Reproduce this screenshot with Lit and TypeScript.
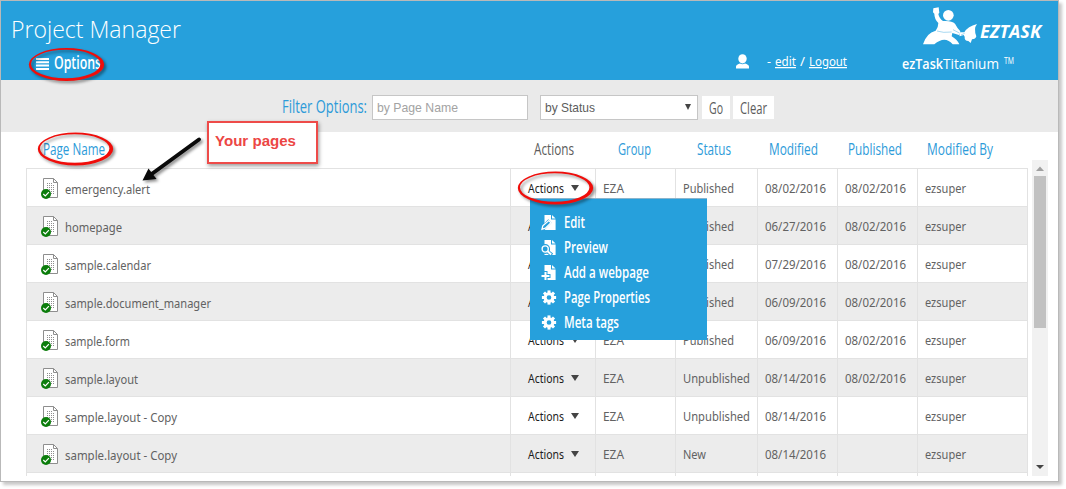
import { LitElement, css, html, svg } from "lit";
import { classMap } from "lit/directives/class-map.js";
import { customElement, property } from "lit/decorators.js";

interface Page {
  name: string;
  status: string;
  modified: string;
  published: string;
}

const pages: Page[] = [
  { name: "emergency.alert", status: "Published", modified: "08/02/2016", published: "08/02/2016" },
  { name: "homepage", status: "Published", modified: "06/27/2016", published: "08/02/2016" },
  { name: "sample.calendar", status: "Published", modified: "07/29/2016", published: "08/02/2016" },
  { name: "sample.document_manager", status: "Published", modified: "06/09/2016", published: "08/02/2016" },
  { name: "sample.form", status: "Published", modified: "06/09/2016", published: "08/02/2016" },
  { name: "sample.layout", status: "Unpublished", modified: "08/14/2016", published: "08/02/2016" },
  { name: "sample.layout - Copy", status: "Unpublished", modified: "08/14/2016", published: "" },
  { name: "sample.layout - Copy", status: "New", modified: "08/14/2016", published: "" },
];

const nameWidths: Record<string, number> = {
  "emergency.alert": 85,
  homepage: 57,
  "sample.calendar": 86,
  "sample.document_manager": 146,
  "sample.form": 65,
  "sample.layout": 73,
  "sample.layout - Copy": 112,
};

const statusWidths: Record<string, number> = { Published: 51, Unpublished: 67, New: 23 };

/* Text set to a given width, for the condensed faces of the interface. */
@customElement("fit-text")
export class FitText extends LitElement {
  static styles = css`
    :host {
      display: block;
      flex: none;
      line-height: 0;
    }

    svg {
      display: block;
      height: 1em;
      overflow: visible;
    }

    text {
      fill: currentColor;
    }

    :host([underline]) text {
      text-decoration: underline;
    }
  `;

  @property()
  text = "";

  @property({ type: Number })
  width = 0;

  render() {
    return html`
      <svg width=${this.width}>
        <text x="0" y="0.8em" textLength=${this.width} lengthAdjust="spacingAndGlyphs">${this.text}</text>
      </svg>
    `;
  }
}

@customElement("page-icon")
export class PageIcon extends LitElement {
  static styles = css`
    :host,
    svg {
      display: block;
    }
  `;

  render() {
    return html`
      <svg width="18" height="22" viewBox="0 0 18 22">
        <path d="M2.5 .5h10l4 4v15h-14z" fill="#fff" stroke="#8e8e8e" />
        <path d="M12.5 .5v4h4" fill="none" stroke="#8e8e8e" />
        <path
          d="M6 5.5h5M6 7.5h8M6 9.5h8M6 11.5h8M6 13.5h8M6 15.5h8"
          stroke="#8e8e8e"
          stroke-dasharray="1 1"
          fill="none"
        />
        <circle cx="5" cy="16" r="5" fill="#0b7d0b" />
        <path d="M2.3 16l2 2 3.6-3.8" fill="none" stroke="#fff" stroke-width="1.2" />
      </svg>
    `;
  }
}

@customElement("menu-icon")
export class MenuIcon extends LitElement {
  static styles = css`
    :host,
    svg {
      display: block;
    }

    .cut {
      stroke: #26a0dc;
      fill: none;
    }

    .line {
      stroke: #fff;
      fill: none;
    }
  `;

  @property()
  name = "edit";

  overlay() {
    switch (this.name) {
      case "edit":
        return svg`
          <path class="cut" d="M1.5 13.5L9 6" stroke-width="4.6" />
          <path class="line" d="M1 14.2l.8-3.4L7.8 5.6l2.2 2.2-5.6 5.4z" stroke-width="1.3" />
        `;
      case "preview":
        return svg`
          <circle class="cut" cx="4.2" cy="9" r="3.4" stroke-width="3" />
          <path class="cut" d="M6.5 11.5L11 15" stroke-width="3.6" />
          <circle cx="4.2" cy="9" r="3.1" fill="#26a0dc" stroke="#fff" stroke-width="1.3" />
          <path class="line" d="M6.6 11.3l3.6 3.2" stroke-width="2" />
        `;
      default:
        return svg`
          <path class="cut" d="M4.5 6v9.5M0 11h9.5" stroke-width="4" />
          <path class="line" d="M4.5 7v8M.5 11h8" stroke-width="2" />
        `;
    }
  }

  gear() {
    const angles = [0, 45, 90, 135, 180, 225, 270, 315];
    return svg`
      <circle cx="8" cy="7.5" r="3.8" fill="none" stroke="#fff" stroke-width="3" />
      ${angles.map(
        (a) => svg`<rect x="6.5" y=".4" width="3" height="3" fill="#fff" transform="rotate(${a} 8 7.5)" />`
      )}
    `;
  }

  render() {
    return html`
      <svg width="16" height="16" viewBox="0 0 16 16">
        ${this.name === "gear"
          ? this.gear()
          : svg`
              <path d="M3.5 0H10v4.5h4.6V15H3.5z" fill="#fff" />
              <path d="M11 0l3.6 3.6H11z" fill="#fff" />
              ${this.overlay()}
            `}
      </svg>
    `;
  }
}

@customElement("actions-menu")
export class ActionsMenu extends LitElement {
  static styles = css`
    :host {
      display: block;
      width: 177px;
      height: 142px;
      box-sizing: border-box;
      padding: 11px 0 0 11px;
      background: #26a0dc;
      border-top: 1px solid #8ab4cc;
      color: #fff;
      font: 600 17px "Open Sans", sans-serif;
    }

    .item {
      display: flex;
      align-items: center;
      gap: 7px;
      height: 25px;
    }
  `;

  items = [
    { icon: "edit", label: "Edit", width: 21 },
    { icon: "preview", label: "Preview", width: 44 },
    { icon: "add", label: "Add a webpage", width: 85 },
    { icon: "gear", label: "Page Properties", width: 86 },
    { icon: "gear", label: "Meta tags", width: 55 },
  ];

  render() {
    return this.items.map(
      (item) => html`
        <div class="item">
          <menu-icon name=${item.icon}></menu-icon>
          <fit-text text=${item.label} width=${item.width}></fit-text>
        </div>
      `
    );
  }
}

@customElement("page-table")
export class PageTable extends LitElement {
  static styles = css`
    :host {
      display: block;
      color: #626262;
      font: 12px "Noto Sans", "Open Sans", sans-serif;
    }

    .row,
    .head {
      display: grid;
      grid-template-columns: 484px 85px 80px 82px 80px 80px 111px;
    }

    .head {
      height: 36px;
      padding-top: 10px;
      box-sizing: border-box;
      color: #2d9bd9;
      font: 16.5px "Open Sans", sans-serif;
    }

    .head .name {
      padding-left: 17px;
    }

    .head .actions {
      padding-left: 24px;
      color: #5c5c5c;
    }

    .head .group {
      padding-left: 23px;
    }

    .head .status {
      padding-left: 22px;
    }

    .head .modified {
      padding-left: 12px;
    }

    .head .published {
      padding-left: 11px;
    }

    .head .by {
      padding-left: 10px;
    }

    .body {
      height: 308px;
      box-sizing: border-box;
      border-top: 1px solid #e2e2e2;
    }

    .row {
      height: 38px;
    }

    .row.last {
      height: 3px;
    }

    .row.alt {
      background: #ececec;
    }

    .cell {
      position: relative;
      display: flex;
      box-sizing: border-box;
      padding: 14.4px 0 0 7px;
      border-left: 1px solid #e2e2e2;
      border-bottom: 1px solid #e2e2e2;
    }

    .cell:last-child {
      border-right: 1px solid #e2e2e2;
    }

    .last .cell {
      padding: 0;
      border-bottom: none;
    }

    .cell.name {
      gap: 6px;
      padding: 9px 0 0 14px;
    }

    .name fit-text {
      padding-top: 6.4px;
    }

    .cell.actions {
      gap: 7px;
      padding-left: 17px;
      color: #1c1c1c;
    }

    .caret {
      margin-top: 1.6px;
      width: 0;
      height: 0;
      border: 4px solid transparent;
      border-top: 6px solid #444;
      border-bottom: none;
    }

    actions-menu {
      position: absolute;
      top: 29px;
      left: 19px;
      z-index: 1;
    }
  `;

  row(page: Page, index: number) {
    return html`
      <div class=${classMap({ row: true, alt: index % 2 === 1 })}>
        <div class="cell name">
          <page-icon></page-icon>
          <fit-text text=${page.name} width=${nameWidths[page.name]}></fit-text>
        </div>
        <div class="cell actions">
          <fit-text text="Actions" width="36"></fit-text>
          <span class="caret"></span>
          ${index === 0 ? html`<actions-menu></actions-menu>` : ""}
        </div>
        <div class="cell"><fit-text text="EZA" width="21"></fit-text></div>
        <div class="cell"><fit-text text=${page.status} width=${statusWidths[page.status]}></fit-text></div>
        <div class="cell"><fit-text text=${page.modified} width="61"></fit-text></div>
        <div class="cell">
          ${page.published ? html`<fit-text text=${page.published} width="61"></fit-text>` : ""}
        </div>
        <div class="cell"><fit-text text="ezsuper" width="41"></fit-text></div>
      </div>
    `;
  }

  render() {
    return html`
      <div class="head">
        <fit-text class="name" text="Page Name" width="62"></fit-text>
        <fit-text class="actions" text="Actions" width="40"></fit-text>
        <fit-text class="group" text="Group" width="33"></fit-text>
        <fit-text class="status" text="Status" width="34"></fit-text>
        <fit-text class="modified" text="Modified" width="49"></fit-text>
        <fit-text class="published" text="Published" width="54"></fit-text>
        <fit-text class="by" text="Modified By" width="66"></fit-text>
      </div>
      <div class="body">
        ${pages.map((page, index) => this.row(page, index))}
        <div class="row last">${[1, 2, 3, 4, 5, 6, 7].map(() => html`<div class="cell"></div>`)}</div>
      </div>
    `;
  }
}

@customElement("app-root")
export class AppRoot extends LitElement {
  static styles = css`
    :host {
      display: block;
      position: relative;
      width: 1066px;
      height: 489px;
      overflow: hidden;
      background: #fff;
      font-family: "Open Sans", sans-serif;
    }

    .window {
      width: 1059px;
      height: 482px;
      box-sizing: border-box;
      border: 1px solid #b9b9b9;
      box-shadow: 3px 3px 3px rgba(0, 0, 0, 0.22);
      background: #fff;
    }

    .header {
      display: grid;
      grid-template-columns: 735px 166px 1fr;
      height: 79px;
      background: #26a0dc;
      color: #fff;
    }

    .titles {
      padding: 18px 0 0 10px;
    }

    .title {
      font-size: 24px;
      font-weight: 300;
    }

    .options {
      display: flex;
      gap: 5px;
      padding: 12px 0 0 25px;
      font-size: 18px;
      font-weight: 600;
    }

    .options svg {
      margin-top: 3px;
    }

    .user {
      display: flex;
      padding-top: 53px;
      font: 12.5px "Noto Sans", "Open Sans", sans-serif;
    }

    .user fit-text {
      padding-top: 2px;
    }

    .dash {
      padding-left: 18px;
    }

    .edit,
    .slash,
    .logout {
      padding-left: 4px;
    }

    .logo {
      display: flex;
      gap: 2px;
      padding: 5px 0 0 21px;
      font-size: 18.5px;
      font-weight: 700;
      font-style: italic;
    }

    .logo fit-text {
      padding-top: 17px;
    }

    .product {
      display: flex;
      padding-top: 12px;
      font-size: 15px;
    }

    .bold {
      font-weight: 600;
    }

    .tm {
      padding: 0 0 0 5px;
      font-size: 8.5px;
    }

    .filter {
      display: flex;
      height: 52px;
      box-sizing: border-box;
      padding: 15px 0 0 281px;
      background: #eaeaea;
      color: #5c5c5c;
      font-size: 17px;
    }

    .label {
      padding: 3px 5px 0 0;
      color: #2d9bd9;
      font-size: 18.5px;
    }

    .field {
      display: flex;
      justify-content: space-between;
      box-sizing: border-box;
      height: 25px;
      padding: 6px 4px 0 4px;
      border: 1px solid #c6c6c6;
      background: #fff;
      font: 13px "Liberation Sans", sans-serif;
    }

    .input {
      width: 156px;
      color: #a3a3a3;
    }

    .select {
      width: 158px;
      margin: 0 4px 0 12px;
    }

    .arrow {
      margin: 2px 2px 0 0;
      width: 0;
      height: 0;
      border: 3.5px solid transparent;
      border-top: 6px solid #444;
      border-bottom: none;
    }

    .button {
      display: flex;
      justify-content: center;
      width: 28px;
      height: 23px;
      box-sizing: border-box;
      margin: 1px 3px 0 0;
      padding-top: 4px;
      background: #fff;
    }

    .button.wide {
      width: 41px;
    }

    .content {
      display: flex;
      padding-left: 25px;
    }

    .scrollbar {
      display: flex;
      flex-direction: column;
      align-items: center;
      width: 16px;
      height: 316px;
      margin: 28px 0 0 4px;
      background: #f1f1f1;
    }

    .thumb {
      width: 12px;
      height: 152px;
      margin-bottom: 132px;
      background: #c1c1c1;
    }

    .notes {
      position: absolute;
      inset: 0;
      z-index: 2;
      pointer-events: none;
      filter: drop-shadow(2px 2.5px 1.5px rgba(0, 0, 0, 0.45));
    }

    .callout {
      position: absolute;
      left: 207px;
      top: 121px;
      z-index: 3;
      box-sizing: border-box;
      width: 111px;
      height: 43px;
      padding: 11px 0 0 6px;
      border: 2px solid #ee4b49;
      background: #fff;
      box-shadow: 1px 2px 4px rgba(0, 0, 0, 0.4);
      color: #ec4644;
      font: bold 15px "Liberation Sans", sans-serif;
    }
  `;

  /* A hand-drawn ring, heavier on the right than on the top left. */
  ring(cx: number, cy: number) {
    const oval = (x: number, y: number, rx: number, ry: number) =>
      `M${x - rx} ${y}a${rx} ${ry} 0 1 0 ${rx * 2} 0a${rx} ${ry} 0 1 0 ${-rx * 2} 0z`;
    return svg`
      <path
        d="${oval(cx, cy, 37.7, 16.4)}${oval(cx - 0.8, cy - 0.5, 34.7, 14.3)}"
        fill="#f00d0a"
        fill-rule="evenodd"
      />
    `;
  }

  logo() {
    return html`
      <svg width="55" height="39" viewBox="38 17 165 117">
        <circle cx="114" cy="45" r="16" fill="#fff" />
        <path
          d="M69 24L85 21L87 37L84 41Q87 55 98 62Q124 60 134 70Q140 82 150 93L146 104L126 98L124 108Q140 117 147 132H127Q104 105 72 132H38Q48 98 76 91Q84 81 84 68Q72 56 72 40L68 36Z"
          fill="#fff"
        />
        <path
          d="M146 96L162 96Q172 78 200 71Q189 85 198 108Q196 117 185 117L181 128L174 122Q162 122 163 109L160 104L148 108Z"
          fill="#fff"
        />
        <path d="M80 92L100 96L124 95M128 88L147 98M152 104L163 99" stroke="#26a0dc" stroke-width="1.2" fill="none" />
      </svg>
    `;
  }

  render() {
    return html`
      <div class="window">
        <div class="header">
          <div class="titles">
            <fit-text class="title" text="Project Manager" width="170"></fit-text>
            <div class="options">
              <svg width="13" height="12" viewBox="0 0 13 12">
                <path d="M0 1h13M0 4.3h13M0 7.6h13M0 10.9h13" stroke="#fff" stroke-width="2" />
              </svg>
              <fit-text text="Options" width="47"></fit-text>
            </div>
          </div>
          <div class="user">
            <svg width="13" height="15" viewBox="0 0 13 15">
              <ellipse cx="6.5" cy="4.8" rx="4.2" ry="4.6" fill="#fff" />
              <path d="M0 14.5v-2c0-1.5 2-2.5 4-3 1.5 1 3.5 1 5 0 2 .5 4 1.5 4 3v2z" fill="#fff" />
            </svg>
            <fit-text class="dash" text="-" width="4"></fit-text>
            <fit-text class="edit" underline text="edit" width="21"></fit-text>
            <fit-text class="slash" text="/" width="5"></fit-text>
            <fit-text class="logout" underline text="Logout" width="38"></fit-text>
          </div>
          <div>
            <div class="logo">
              ${this.logo()}
              <fit-text text="EZTASK" width="61"></fit-text>
            </div>
            <div class="product">
              <fit-text class="bold" text="ezTask" width="41"></fit-text>
              <fit-text text="Titanium" width="56"></fit-text>
              <fit-text class="tm" text="TM" width="10"></fit-text>
            </div>
          </div>
        </div>
        <div class="filter">
          <fit-text class="label" text="Filter Options:" width="85"></fit-text>
          <div class="field input"><fit-text text="by Page Name" width="81"></fit-text></div>
          <div class="field select">
            <fit-text text="by Status" width="50"></fit-text>
            <span class="arrow"></span>
          </div>
          <div class="button"><fit-text text="Go" width="14"></fit-text></div>
          <div class="button wide"><fit-text text="Clear" width="27"></fit-text></div>
        </div>
        <div class="content">
          <page-table></page-table>
          <div class="scrollbar">
            <svg width="16" height="16"><path d="M4 11l4-4.5 4 4.5z" fill="#a0a0a0" /></svg>
            <div class="thumb"></div>
            <svg width="16" height="16"><path d="M4 5l4 4 4-4z" fill="#444" /></svg>
          </div>
        </div>
      </div>
      <svg class="notes" width="1066" height="489">
        ${this.ring(66.5, 64.5)} ${this.ring(75.5, 149)} ${this.ring(555.5, 188)}
        <path d="M199 139.5L151 174.5" stroke="#0a0a0a" stroke-width="4" stroke-linecap="round" />
        <path d="M142.5 180.5l6-12 8 10.5z" fill="#0a0a0a" />
      </svg>
      <div class="callout"><fit-text text="Your pages" width="81"></fit-text></div>
    `;
  }
}
